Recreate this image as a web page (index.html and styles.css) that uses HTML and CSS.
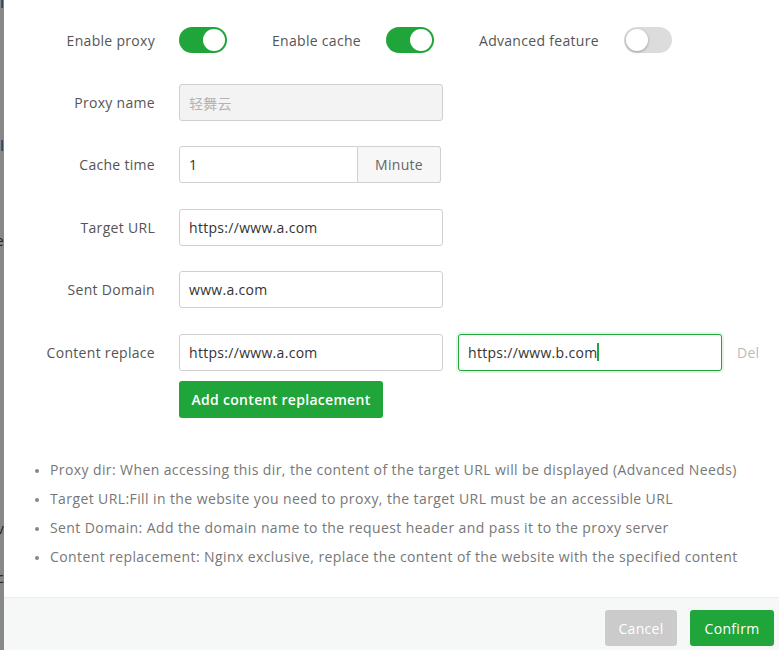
FILE: index.html
```html
<!DOCTYPE html>
<html>
<head>
<meta charset="utf-8">
<link rel="stylesheet" href="styles.css">
</head>
<body>
<div class="page">
  <div class="backdrop">
    <span class="frag f1">l</span>
    <span class="frag f2">l</span>
    <span class="frag f3">e</span>
    <span class="frag f4">v</span>
    <span class="frag f5">c</span>
  </div>
  <div class="modal">
    <div class="content">
      <div class="row switches">
        <div class="sw-group">
          <span class="label">Enable proxy</span>
          <span class="switch on"><span class="knob"></span></span>
        </div>
        <div class="sw-group">
          <span class="label plain">Enable cache</span>
          <span class="switch on"><span class="knob"></span></span>
        </div>
        <div class="sw-group">
          <span class="label plain">Advanced feature</span>
          <span class="switch"><span class="knob"></span></span>
        </div>
      </div>

      <div class="row">
        <span class="label">Proxy name</span>
        <div class="input disabled"><span class="placeholder">轻舞云</span></div>
      </div>

      <div class="row">
        <span class="label">Cache time</span>
        <div class="group">
          <div class="input left">1</div>
          <div class="addon">Minute</div>
        </div>
      </div>

      <div class="row">
        <span class="label">Target URL</span>
        <div class="input">https://www.a.com</div>
      </div>

      <div class="row">
        <span class="label">Sent Domain</span>
        <div class="input">www.a.com</div>
      </div>

      <div class="row replace">
        <span class="label">Content replace</span>
        <div class="input">https://www.a.com</div>
        <div class="input focus">https://www.b.com<span class="caret"></span></div>
        <span class="del">Del</span>
      </div>

      <div class="row add">
        <button class="btn green">Add content replacement</button>
      </div>

      <ul class="help">
        <li>Proxy dir: When accessing this dir, the content of the target URL will be displayed (Advanced Needs)</li>
        <li>Target URL:Fill in the website you need to proxy, the target URL must be an accessible URL</li>
        <li>Sent Domain: Add the domain name to the request header and pass it to the proxy server</li>
        <li>Content replacement: Nginx exclusive, replace the content of the website with the specified content</li>
      </ul>
    </div>
    <div class="footer">
      <button class="btn gray">Cancel</button>
      <button class="btn green">Confirm</button>
    </div>
  </div>
</div>
</body>
</html>
```

FILE: styles.css
```css
* { box-sizing: border-box; }
html, body { margin: 0; padding: 0; }
body {
  width: 779px;
  height: 650px;
  overflow: hidden;
  font-family: "Open Sans", "Liberation Sans", Arial, "Noto Sans CJK SC", sans-serif;
  font-size: 14px;
  letter-spacing: 0.3px;
  color: #555;
  background: #fff;
}
.page { display: flex; height: 650px; }
.backdrop {
  width: 4px;
  flex: none;
  background: #888;
  position: relative;
  overflow: hidden;
}
.frag {
  position: absolute;
  right: 0;
  font-size: 14px;
  color: #222;
  line-height: 14px;
}
.f1 { top: -4px; }
.f2 { top: 139px; }
.f3 { top: 234px; }
.f4 { top: 522px; }
.f5 { top: 571px; }

.modal {
  flex: 1;
  display: flex;
  flex-direction: column;
  background: #fff;
}
.content {
  height: 597px;
  padding-top: 27px;
}
.row {
  display: flex;
  align-items: center;
  margin-bottom: 25.4px;
}
.label {
  width: 151px;
  text-align: right;
  margin-right: 24px;
  color: #555;
  flex: none;
  white-space: nowrap;
}
.switches { height: 26px; margin-bottom: 31px; }
.sw-group { display: flex; align-items: center; }
.sw-group .label.plain {
  width: auto;
  margin-left: 45px;
  margin-right: 25px;
}
.switch {
  width: 48px;
  height: 26px;
  border-radius: 13px;
  background: #dcdcdc;
  position: relative;
  display: inline-block;
  flex: none;
}
.switch .knob {
  position: absolute;
  top: 2px;
  left: 2px;
  width: 22px;
  height: 22px;
  border-radius: 50%;
  background: #fff;
  box-shadow: 0 1px 3px rgba(0,0,0,0.3);
}
.switch.on { background: #20a53a; }
.switch.on .knob { left: 24px; box-shadow: none; }

.input {
  width: 264px;
  height: 37px;
  border: 1px solid #d0d0d0;
  border-radius: 3px;
  padding: 0 9px;
  display: flex;
  align-items: center;
  color: #333;
  background: #fff;
  flex: none;
}
.input.disabled { background: #f3f3f3; }
.placeholder { color: #b4b4b4; }
.group { display: flex; }
.input.left {
  width: 179px;
  border-radius: 3px 0 0 3px;
}
.addon {
  width: 83px;
  height: 37px;
  border: 1px solid #d0d0d0;
  border-left: none;
  border-radius: 0 3px 3px 0;
  background: #f7f7f7;
  display: flex;
  align-items: center;
  justify-content: center;
  color: #666;
}
.replace { margin-bottom: 10px; }
.input.focus {
  margin-left: 15px;
  border-color: #20a53a;
  box-shadow: 0 0 0 2px rgba(32,165,58,0.12);
}
.caret {
  display: inline-block;
  width: 2px;
  height: 18px;
  background: #20a53a;
}
.del {
  margin-left: 15px;
  color: #bbb;
}
.add { padding-left: 175px; margin-bottom: 37px; }
.btn {
  font-family: inherit;
  font-size: 14px;
  letter-spacing: 0.3px;
  border: none;
  border-radius: 3px;
  color: #fff;
  height: 37px;
  padding: 0;
}
.btn.green { background: #20a53a; }
.add .btn { width: 204px; font-weight: 600; }
.help {
  margin: 0;
  padding-left: 46px;
  color: #777;
  line-height: 29px;
  letter-spacing: 0.4px;
  white-space: nowrap;
}
.help li::marker { color: #888; font-size: 12px; }
.footer {
  flex: 1;
  background: #f6f8f8;
  border-top: 1px solid #eceeee;
  display: flex;
  justify-content: flex-end;
  align-items: flex-start;
  padding-top: 12px;
  padding-right: 5px;
  gap: 13px;
}
.footer .btn { height: 36px; }
.btn.gray { background: #cbcbcb; width: 72px; }
.footer .btn.green { width: 84px; }
```
